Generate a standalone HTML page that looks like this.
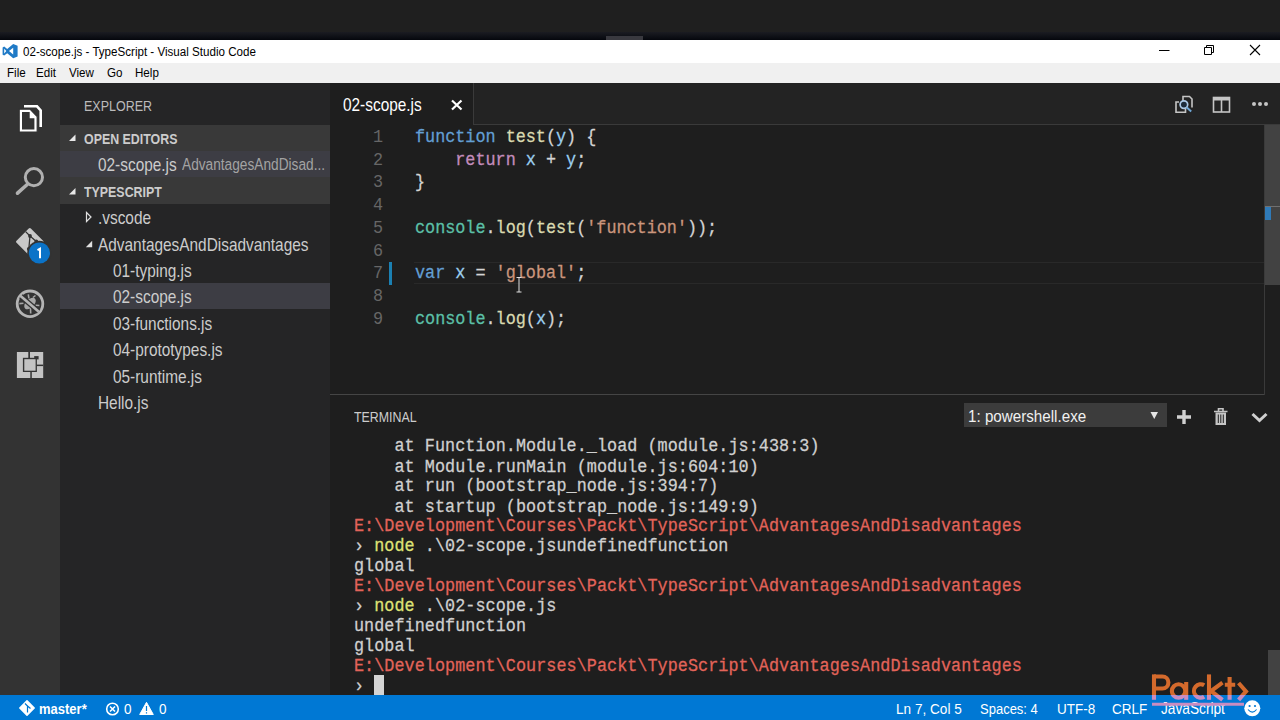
<!DOCTYPE html>
<html><head><meta charset="utf-8">
<style>
*{margin:0;padding:0;box-sizing:border-box}
html,body{width:1280px;height:720px;overflow:hidden;background:#1e1e1e;font-family:"Liberation Sans",sans-serif}
.a{position:absolute;white-space:pre}
.u{transform:scaleY(1.14);transform-origin:0 80%}
#topbar{left:0;top:0;width:1280px;height:40px;background:#1f1f1f}
#topshade{left:0;top:32px;width:1280px;height:8px;background:linear-gradient(#1b1c22,#05070d)}
#title{left:0;top:40px;width:1280px;height:23px;background:#fff}
#menu{left:0;top:63px;width:1280px;height:20px;background:#f0f0f0}
#act{left:0;top:83px;width:60px;height:612px;background:#333333}
#side{left:60px;top:83px;width:270px;height:612px;background:#252526}
#tabs{left:330px;top:83px;width:950px;height:42px;background:#252526}
#editor{left:330px;top:125px;width:950px;height:270px;background:#1e1e1e}
#panel{left:330px;top:394px;width:950px;height:301px;background:#1e1e1e;border-top:1px solid #454545}
#status{left:0;top:695px;width:1280px;height:25px;background:#0078d4}
.tt{font-size:11.6px;color:#000;line-height:14px}
.mn{font-size:11.6px;color:#000;line-height:14px}
.sd{font-size:15.4px;color:#cccccc;line-height:18px}
.hd{font-size:12.4px;font-weight:bold;color:#cccccc;line-height:14px;transform:scaleY(1.22)!important}
.ln{font-family:"Liberation Mono",monospace;font-size:16.8px;color:#666666;text-align:right;width:60px;line-height:21.714px;transform:scaleY(1.05);transform-origin:0 0}
.cd{font-family:"Liberation Mono",monospace;font-size:16.8px;color:#d4d4d4;-webkit-text-stroke:0.25px;line-height:21.714px;transform:scaleY(1.05);transform-origin:0 0}
.tm{font-family:"Liberation Mono",monospace;font-size:16.8px;color:#d0d0d0;-webkit-text-stroke:0.25px;line-height:18.518px;letter-spacing:0.05px;transform:scaleY(1.08);transform-origin:0 0}
.kw{color:#639fd4}.fn{color:#dadab0}.pa{color:#9ccfee}.rt{color:#c38cbc}.cl{color:#5cc0a8}.st{color:#ca957c}
.red{color:#e3645a}.yel{color:#dfe276}
.sb{font-size:13.5px;color:#fff;line-height:16px}
</style></head><body>
<div class="a" id="topbar"></div>
<div class="a" id="topshade"></div>
<div class="a" style="left:606px;top:36px;width:37px;height:4px;background:#39393f"></div>
<div class="a" id="title"></div>
<div class="a" id="menu"></div>
<div class="a" id="act"></div>
<div class="a" id="side"></div>
<div class="a" id="tabs"></div>
<div class="a" id="editor"></div>
<div class="a" id="panel"></div>
<div class="a" id="status"></div>

<!-- title text -->
<div class="a u tt" style="left:23px;top:45px">02-scope.js - TypeScript - Visual Studio Code</div>
<div class="a u mn" style="left:7px;top:66px">File</div>
<div class="a u mn" style="left:36px;top:66px">Edit</div>
<div class="a u mn" style="left:69px;top:66px">View</div>
<div class="a u mn" style="left:107px;top:66px">Go</div>
<div class="a u mn" style="left:135px;top:66px">Help</div>

<!-- sidebar -->
<div class="a u" style="left:84px;top:99.5px;font-size:12.5px;color:#bbbbbb;line-height:14px">EXPLORER</div>
<div class="a" style="left:60px;top:125px;width:270px;height:26px;background:#393939"></div>
<div class="a" style="left:60px;top:151px;width:270px;height:26px;background:#3d3d44"></div>
<div class="a" style="left:60px;top:177px;width:270px;height:27px;background:#393939"></div>
<div class="a" style="left:60px;top:283px;width:270px;height:26px;background:#3d3d44"></div>
<div class="a u hd" style="left:84px;top:132.5px">OPEN EDITORS</div>
<div class="a u sd" style="left:98px;top:156.5px">02-scope.js</div>
<div class="a u" style="left:182px;top:158px;font-size:13.7px;color:#a3a3a3;line-height:16px">AdvantagesAndDisad...</div>
<div class="a u hd" style="left:84px;top:185.5px">TYPESCRIPT</div>
<div class="a u sd" style="left:98px;top:209.5px">.vscode</div>
<div class="a u sd" style="left:98px;top:236.5px">AdvantagesAndDisadvantages</div>
<div class="a u sd" style="left:113px;top:262.5px">01-typing.js</div>
<div class="a u sd" style="left:113px;top:288.5px">02-scope.js</div>
<div class="a u sd" style="left:113px;top:315.5px">03-functions.js</div>
<div class="a u sd" style="left:113px;top:341.5px">04-prototypes.js</div>
<div class="a u sd" style="left:113px;top:368.5px">05-runtime.js</div>
<div class="a u sd" style="left:98px;top:394.5px">Hello.js</div>

<!-- tabs -->
<div class="a" style="left:330px;top:83px;width:143px;height:42px;background:#1e1e1e"></div>
<div class="a" style="left:473px;top:83px;width:807px;height:42px;border-left:1px solid #3a3a3a;border-bottom:1px solid #3a3a3a;background:#232323"></div>
<div class="a u sd" style="left:343px;top:96.5px;color:#ffffff">02-scope.js</div>

<!-- editor -->
<div class="a" style="left:414px;top:262px;width:850px;height:22px;border-top:1px solid #292929;border-bottom:1px solid #292929"></div>
<div class="a" style="left:389px;top:262px;width:3px;height:23px;background:#1b80b2"></div>
<div class="a ln" style="left:323px;top:126px">1
2
3
4
5
6
7
8
9</div>
<div class="a cd" style="left:415px;top:126px"><span class="kw">function</span> <span class="fn">test</span>(<span class="pa">y</span>) {
    <span class="rt">return</span> <span class="pa">x</span> + <span class="pa">y</span>;
}

<span class="cl">console</span>.<span class="fn">log</span>(<span class="fn">test</span>(<span class="st">'function'</span>));

<span class="kw">var</span> <span class="pa">x</span> = <span class="st">'global'</span>;

<span class="cl">console</span>.<span class="fn">log</span>(<span class="pa">x</span>);</div>

<!-- overview ruler -->
<div class="a" style="left:1264px;top:125px;width:16px;height:270px;background:#1e1e1e;border-left:1px solid #3a3a3a"></div>
<div class="a" style="left:1265px;top:125px;width:15px;height:160px;background:#424242"></div>
<div class="a" style="left:1265px;top:206px;width:15px;height:1px;background:#707070"></div>
<div class="a" style="left:1265px;top:207px;width:6px;height:13px;background:#2f7ab8"></div>

<!-- terminal -->
<div class="a u" style="left:354px;top:411px;font-size:12.4px;color:#cccccc;line-height:14px">TERMINAL</div>
<div class="a" style="left:964px;top:403px;width:203px;height:24px;background:#3c3c3c"></div>
<div class="a u" style="left:968px;top:408px;font-size:15.2px;color:#f0f0f0;line-height:18px">1: powershell.exe</div>
<div class="a tm" style="left:354px;top:437.2px">    at Function.Module._load (module.js:438:3)
    at Module.runMain (module.js:604:10)
    at run (bootstrap_node.js:394:7)
    at startup (bootstrap_node.js:149:9)
<span class="red">E:\Development\Courses\Packt\TypeScript\AdvantagesAndDisadvantages</span>
› <span class="yel">node</span> .\02-scope.jsundefinedfunction
global
<span class="red">E:\Development\Courses\Packt\TypeScript\AdvantagesAndDisadvantages</span>
› <span class="yel">node</span> .\02-scope.js
undefinedfunction
global
<span class="red">E:\Development\Courses\Packt\TypeScript\AdvantagesAndDisadvantages</span>
›</div>
<div class="a" style="left:374px;top:675px;width:10px;height:20px;background:#d4d4d4"></div>
<div class="a" style="left:1268px;top:650px;width:12px;height:45px;background:#424242"></div>

<!-- status -->
<div class="a u sb" style="left:39px;top:702px;font-weight:bold;font-size:13px">master*</div>
<div class="a u sb" style="left:124px;top:702px">0</div>
<div class="a u sb" style="left:159px;top:702px">0</div>
<div class="a u sb" style="left:896px;top:702px;font-size:13.6px">Ln 7, Col 5</div>
<div class="a u sb" style="left:980px;top:702px;font-size:13px">Spaces: 4</div>
<div class="a u sb" style="left:1057px;top:702px">UTF-8</div>
<div class="a u sb" style="left:1112px;top:702px">CRLF</div>
<div class="a u sb" style="left:1161px;top:702px;font-size:13.7px">JavaScript</div>

<!-- icons overlay -->
<svg class="a" style="left:0;top:0" width="1280" height="720" viewBox="0 0 1280 720">
<!-- VS logo -->
<g fill="#1f7ac6">
<path d="M13.2,44 L17.6,45.8 V56.4 L13.2,58.2 L7.2,53.2 L4.2,55.6 L2.6,54.8 V47.4 L4.2,46.6 L7.2,49 Z M13.2,47.8 L9,51.1 L13.2,54.4 Z M4.2,48.8 V53.4 L6.3,51.1 Z"/>
</g>
<!-- window controls -->
<path d="M1159,50.5 H1169.5" stroke="#000" stroke-width="1"/>
<path d="M1204.5,47.5 H1211.5 V54.5 H1204.5 Z M1206.5,47.5 V45.5 H1213.5 V52.5 H1211.5" stroke="#000" stroke-width="1" fill="none"/>
<path d="M1250,45 L1260,55 M1260,45 L1250,55" stroke="#000" stroke-width="1.1"/>
<!-- explorer icon -->
<path d="M24,106.3 H37 L40.7,110.5 V127" stroke="#fff" stroke-width="2.6" fill="none"/>
<path d="M19.2,109.2 H30 L37.2,116.5 V132 H19.2 Z" fill="#fff" stroke="#333" stroke-width="1.2"/>
<path d="M22,112 H29.7 V118.3 H34.4 V129.4 H22 Z" fill="#333"/>
<!-- search icon -->
<circle cx="33.9" cy="177.2" r="8.6" stroke="#b0b0b0" stroke-width="3" fill="none"/>
<path d="M27.2,184.5 L17.5,193.2" stroke="#b0b0b0" stroke-width="3.6" stroke-linecap="round"/>
<!-- git icon -->
<path d="M29.8,229.5 L42,241.7 L29.8,253.9 L17.6,241.7 Z" fill="#c8c8c8" stroke="#c8c8c8" stroke-width="3" stroke-linejoin="round"/>
<path d="M25.6,231.6 L30,236 L28.8,249 M30,236 L36.3,241.4" stroke="#333" stroke-width="1.3" fill="none"/>
<circle cx="30" cy="236" r="1.9" fill="#333"/>
<circle cx="36.3" cy="241.4" r="1.9" fill="#333"/>
<circle cx="28.8" cy="249" r="1.9" fill="#333"/>
<circle cx="39.4" cy="253" r="12.2" fill="#333"/>
<circle cx="39.4" cy="253" r="10.6" fill="#0b73c8"/>
<path d="M37.5,250.2 L40,248.8 V258.2" stroke="#fff" stroke-width="2" fill="none"/>
<!-- debug icon -->
<circle cx="30" cy="303.8" r="12.8" stroke="#b4b4b4" stroke-width="2.8" fill="none"/>
<g fill="#a8a8a8" stroke="#a8a8a8">
<ellipse cx="30" cy="303.5" rx="7" ry="4.2" transform="rotate(-45 30 303.5)" stroke="none"/>
<path d="M28.3,294.4 L28.9,298.5 M35.5,305.2 L39.4,305.5 M19.4,303.6 L23.5,303.2 M30.5,308 L30.7,313.5 M33,297.5 L35.5,295.5" stroke-width="1.6" fill="none"/>
</g>
<path d="M20.8,296.3 L38.6,311.5" stroke="#333" stroke-width="5.2"/>
<path d="M20.3,295.8 L38.8,311.8" stroke="#b4b4b4" stroke-width="2.6"/>
<!-- extensions icon -->
<rect x="16.9" y="352" width="26.3" height="26" fill="#c3c3c3"/>
<g fill="#333">
<rect x="28.3" y="352" width="1.7" height="6.5"/>
<rect x="30.3" y="371.5" width="1.5" height="6.5"/>
<rect x="36.5" y="364.6" width="6.7" height="1.5"/>
<rect x="22.9" y="357.8" width="14" height="14.2"/>
<rect x="34.2" y="356.1" width="4.4" height="3.3"/>
</g>
<rect x="24.3" y="359.2" width="11.3" height="11.5" fill="#c3c3c3"/>
<!-- editor toolbar icons -->
<path d="M1183,102 V96.5 H1189.5 L1192,99 V107.5" stroke="#c5c5c5" stroke-width="1.6" fill="none"/>
<path d="M1179,102 H1176 V112.3 H1185.5 V109" stroke="#c5c5c5" stroke-width="1.6" fill="none"/>
<circle cx="1183.9" cy="104.6" r="3.8" stroke="#aac8e6" stroke-width="1.7" fill="#1c2c3c"/>
<path d="M1186.6,107.3 L1191.2,111.6" stroke="#6fa6d6" stroke-width="2"/>
<rect x="1213.5" y="97.5" width="16" height="14.5" fill="none" stroke="#c5c5c5" stroke-width="1.6"/>
<rect x="1213.5" y="97.5" width="16" height="3" fill="#c5c5c5"/>
<path d="M1221.5,100 V112" stroke="#c5c5c5" stroke-width="1.6"/>
<circle cx="1254" cy="104" r="2" fill="#c5c5c5"/>
<circle cx="1260" cy="104" r="2" fill="#c5c5c5"/>
<circle cx="1266" cy="104" r="2" fill="#c5c5c5"/>
<!-- tab close -->
<path d="M452,100.5 L461.5,109.5 M461.5,100.5 L452,109.5" stroke="#fff" stroke-width="2.2"/>
<!-- sidebar triangles -->
<path d="M69,141 L75.5,134.5 V141 Z" fill="#e8e8e8"/>
<path d="M69,194.5 L75.5,188 V194.5 Z" fill="#e8e8e8"/>
<path d="M86.5,212.5 L91,217 L86.5,221.5 Z" fill="none" stroke="#e0e0e0" stroke-width="1.2"/>
<path d="M85.8,247.3 L92.2,240.8 V247.3 Z" fill="#e0e0e0"/>
<!-- I-beam cursor -->
<path d="M516.5,277.5 H521.5 M519,277.5 V292 M516.5,292 H521.5" stroke="#e0e0e0" stroke-width="1"/>
<!-- terminal toolbar -->
<path d="M1150.5,412 H1158 L1154.25,419 Z" fill="#e6e6e6"/>
<path d="M1184,410 V424 M1177,417 H1191" stroke="#d0d0d0" stroke-width="3.4"/>
<path d="M1214,411.5 H1227.5 M1218.5,411 V408.8 H1223 V411" stroke="#c5c5c5" stroke-width="1.6" fill="none"/>
<path d="M1215.5,412.5 H1226 V425 H1215.5 Z" fill="#c5c5c5"/>
<path d="M1218.3,414.5 V423 M1220.8,414.5 V423 M1223.3,414.5 V423" stroke="#1e1e1e" stroke-width="1"/>
<path d="M1252.5,414 L1259.5,420.5 L1266.5,414" stroke="#d0d0d0" stroke-width="3" fill="none"/>
<!-- status icons -->
<path d="M27,700.8 L34.2,708 L27,715.2 L19.8,708 Z" fill="#fff" stroke="#fff" stroke-width="1.5" stroke-linejoin="round"/>
<path d="M25,703.5 L27.5,706 V712.5 M27.5,706 L30.5,708.5" stroke="#0078d4" stroke-width="1.2" fill="none"/>
<circle cx="112.5" cy="709" r="5.8" stroke="#fff" stroke-width="1.6" fill="none"/>
<path d="M110,706.5 L115,711.5 M115,706.5 L110,711.5" stroke="#fff" stroke-width="1.6"/>
<path d="M146.5,702.3 L153.3,714.5 H139.7 Z" fill="#fff" stroke="#fff" stroke-width="1" stroke-linejoin="round"/>
<path d="M146.5,706 V711 M146.5,712.2 V713.4" stroke="#0078d4" stroke-width="1.2"/>
<circle cx="1252.3" cy="708.3" r="8" fill="#fff"/>
<circle cx="1249.6" cy="706" r="1.1" fill="#0078d4"/>
<circle cx="1255" cy="706" r="1.1" fill="#0078d4"/>
<path d="M1248,709.5 Q1252.3,714.8 1256.6,709.5" stroke="#0078d4" stroke-width="1.1" fill="none"/>
<!-- packt logo -->
<defs>
<clipPath id="cTop"><rect x="1100" y="600" width="180" height="95"/></clipPath>
<clipPath id="cBot"><rect x="1100" y="695" width="180" height="25"/></clipPath>
<g id="packt" fill="none" stroke-width="4.1">
<path d="M1154,674.4 V699.8"/>
<path d="M1154,676.5 H1162.4 A6,6 0 0 1 1162.4,688.5 H1154"/>
<circle cx="1178.6" cy="691" r="6.7"/>
<path d="M1186.2,682 V699.8"/>
<path d="M1204.2,685.3 A6.7,6.7 0 1 0 1204.2,696.7"/>
<path d="M1209,674.4 V699.8"/>
<path d="M1222.5,682.6 L1211,691 L1222.5,699.8"/>
<path d="M1229.6,677 V699.8 M1224.8,684.7 H1235.2"/>
<path d="M1238.6,683 L1246,691.4 L1238.6,699.8"/>
<path d="M1152,704.3 H1244" stroke-width="3"/>
</g>
</defs>
<use href="#packt" stroke="#d46a2c" clip-path="url(#cTop)"/>
<use href="#packt" stroke="#c98cc0" clip-path="url(#cBot)"/>

</svg>
</body></html>
